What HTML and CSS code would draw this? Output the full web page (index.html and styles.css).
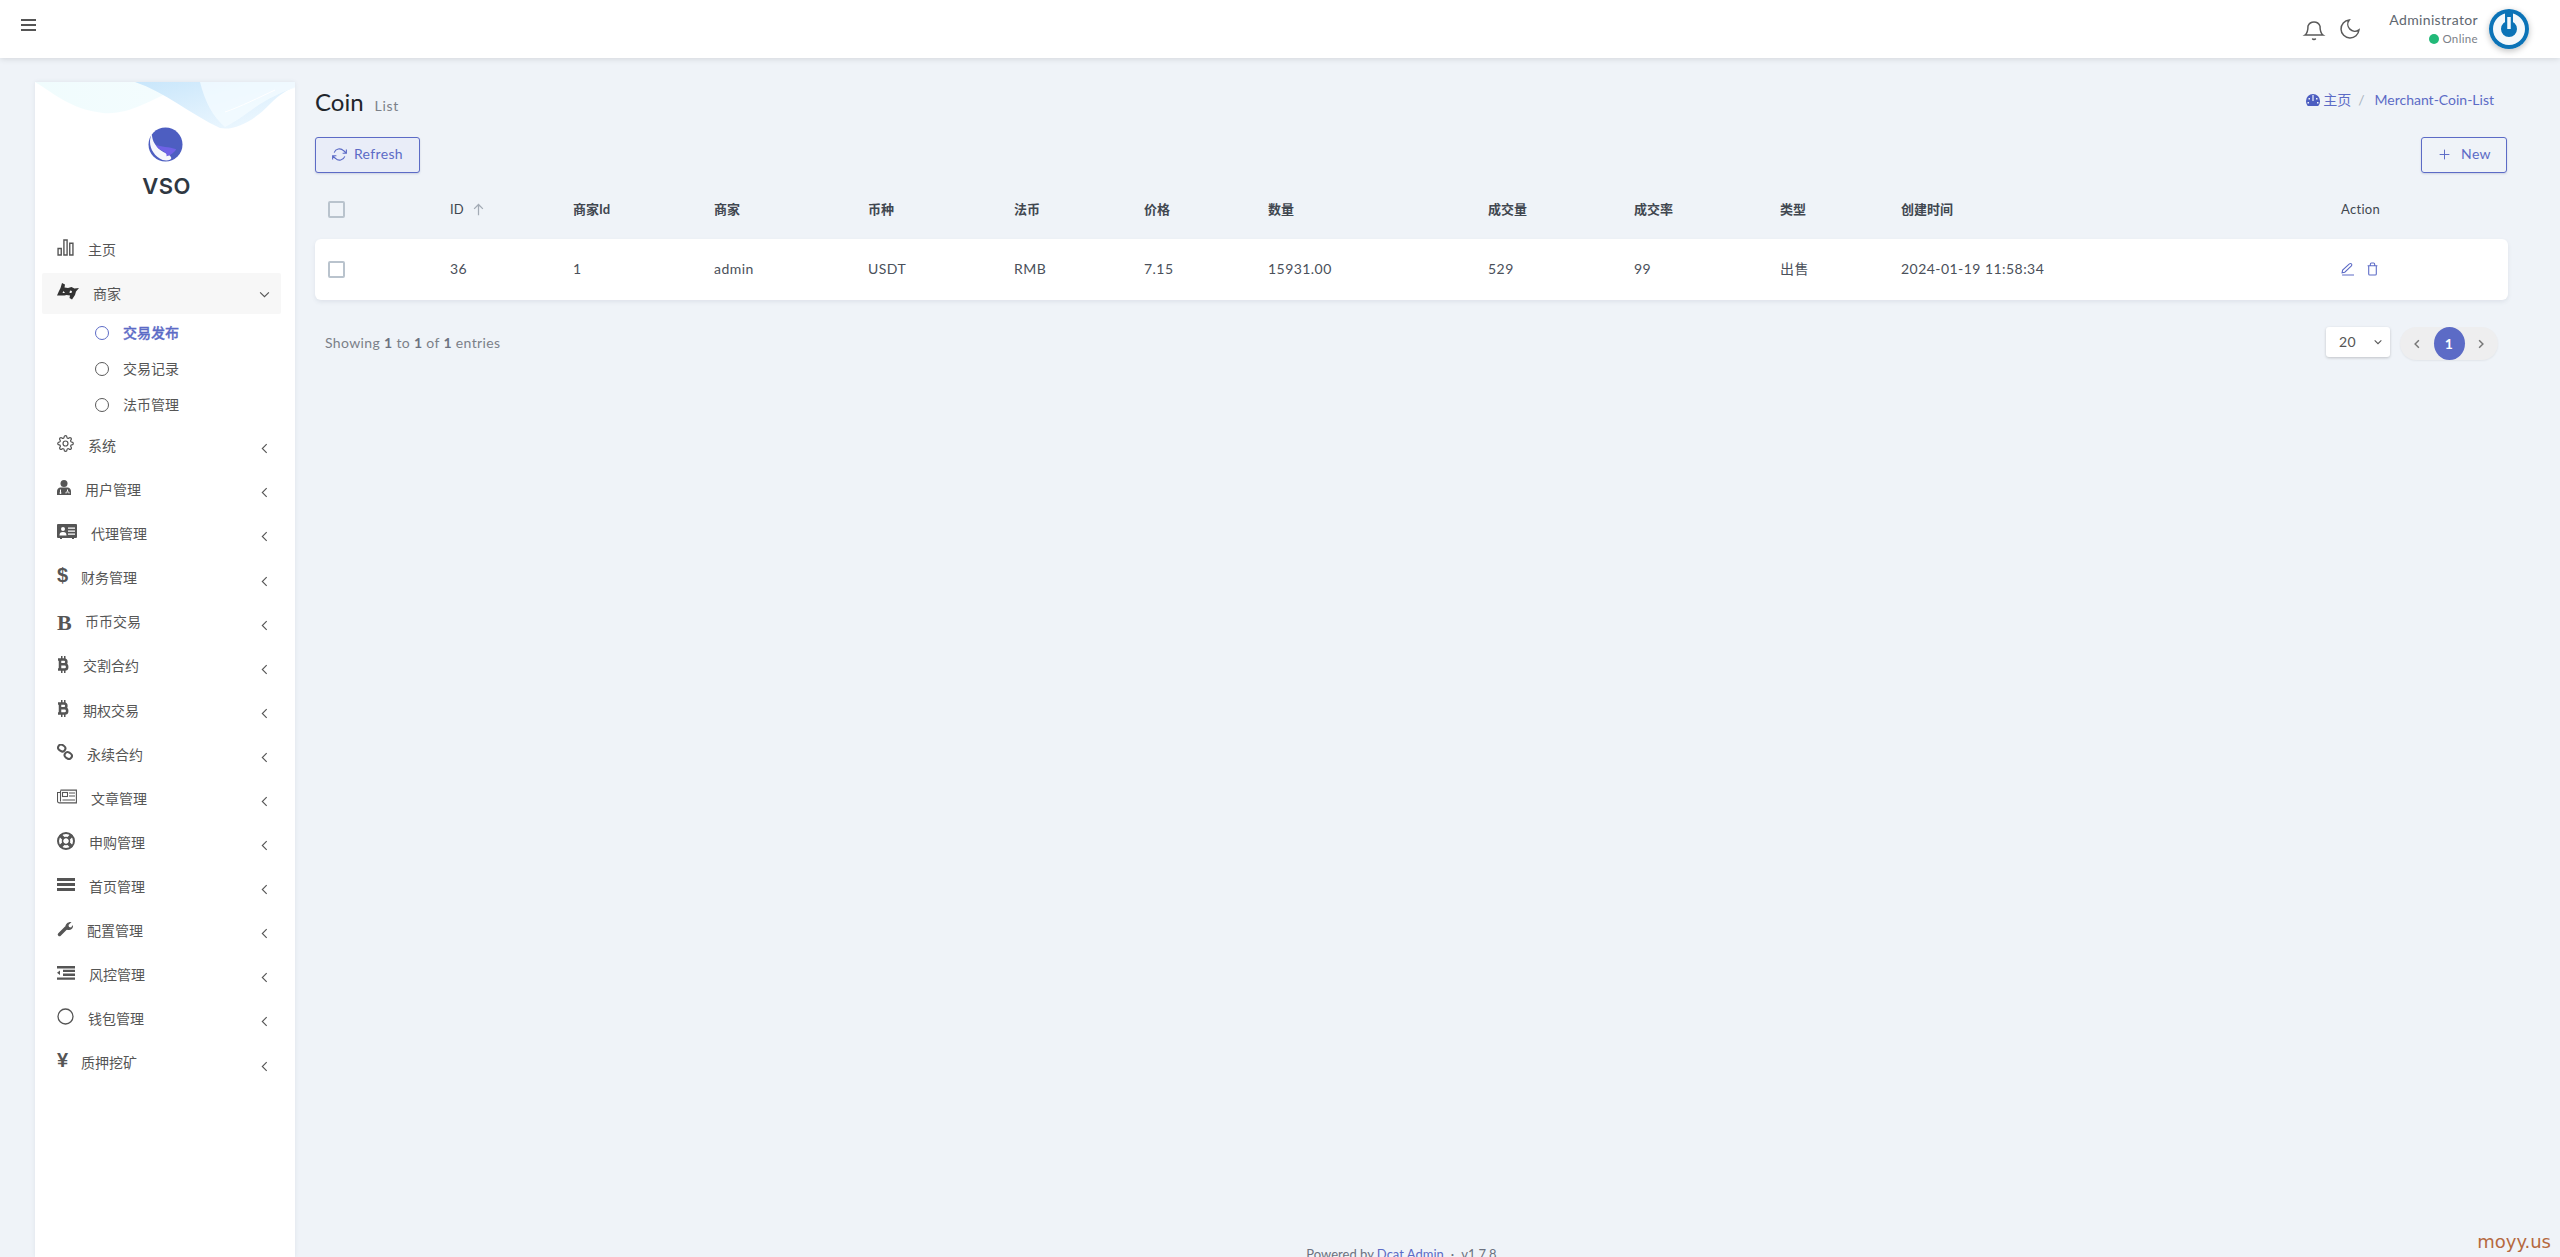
FILE: index.html
```html
<!DOCTYPE html>
<html lang="zh-CN">
<head>
<meta charset="utf-8">
<title>Coin List</title>
<link rel="stylesheet" href="styles.css">
</head>
<body>
<svg class="defs" width="0" height="0" aria-hidden="true">
  <symbol id="chev-left" viewBox="0 0 8 12"><path d="M6.500 1 1.500 6l5 5" fill="none" stroke="currentColor" stroke-width="1.300"/></symbol>
  <symbol id="btc" viewBox="0 0 12 17"><g fill="none" stroke="currentColor" stroke-width="2.500"><path d="M1 3.500h6a2.300 2.300 0 0 1 0 4.800H3m0 0h4.600a2.500 2.500 0 0 1 0 5.200H1M3 3.500v10"/></g><path d="M4 0h1.500v3H4zM7 0h1.500v3H7zM4 14h1.500v3H4zM7 14h1.500v3H7z" fill="currentColor"/></symbol>
</svg>
<header class="topbar">
  <svg class="burger" viewBox="0 0 15 12"><path d="M0 0h15v2H0zM0 5h15v2H0zM0 10h15v2H0z" fill="currentColor"/></svg>
  <div class="top-right">
    <svg class="top-icon" viewBox="0 0 24 24"><path d="M18 9A6.500 6.500 0 0 0 6 9c0 7-3 9-3 9h18s-3-2-3-9"/><path d="M13.700 21.500a2 2 0 0 1-3.400 0"/></svg>
    <svg class="top-icon" viewBox="0 0 24 24"><path d="M21 12.790A9 9 0 1 1 11.210 3 7 7 0 0 0 21 12.790z"/></svg>
    <div class="user">
      <div class="user-name">Administrator</div>
      <div class="user-status"><span class="dot"></span>Online</div>
    </div>
    <div class="avatar">
      <svg viewBox="0 0 40 40"><circle cx="20" cy="20" r="20" fill="#0b73b7"/><circle cx="20" cy="20" r="12" fill="none" stroke="#f4f8fb" stroke-width="8"/><path d="M20 4v16" stroke="#0b73b7" stroke-width="8"/><path d="M20 8v12" stroke="#f4f8fb" stroke-width="3.500"/></svg>
    </div>
  </div>
</header>
<div class="layout">
  <aside class="sidebar">
    <svg class="wave" viewBox="0 0 260 50" preserveAspectRatio="none">
      <defs>
        <linearGradient id="w1" x1="0" x2="1" y1="0" y2="0"><stop offset="0" stop-color="#f0fcfd"/><stop offset="1" stop-color="#f4fcfe"/></linearGradient>
        <linearGradient id="w2" x1="0" x2="1" y1="0" y2="1"><stop offset="0" stop-color="#c8e6fb"/><stop offset=".55" stop-color="#e0f1fd"/><stop offset="1" stop-color="#f2faff"/></linearGradient>
      </defs>
      <path d="M0 0C20 12 35 27 68 31 95 33 115 18 140 8L150 0z" fill="url(#w1)"/>
      <path d="M100 0C130 10 155 32 185 46 200 49 220 38 235 22 245 12 252 8 260 5V0z" fill="url(#w2)"/>
      <path d="M165 0C170 20 178 35 190 45 205 38 225 20 240 14 250 9 255 7 260 6V0z" fill="#f4fbff" opacity=".8"/>
      <path d="M190 30C205 25 225 15 240 8" fill="none" stroke="#fff" stroke-width="1"/>
    </svg>
    <div class="brand">
      <svg class="logo" viewBox="0 0 36 36">
        <circle cx="18" cy="18" r="17.500" fill="#4d5ec1"/>
        <path d="M4 7C-1 17 4 29 15 34c5 1 9 0 9-2-1-4-7-5-11-8C9 21 4 15 4 7z" fill="#fff" opacity=".95"/>
        <path d="M8 18c5 3 14 2 21 5-3 5-8 7-10 7 1-3-3-5-7-7-2-1-3-3-4-5z" fill="#6f62e6"/>
      </svg>
      <div class="brand-name">VSO</div>
    </div>
    <nav class="menu">
      <a class="item">
        <svg class="ico w17" viewBox="0 0 16 16"><path d="M1 9h3v6H1zM6.500 1h3v14h-3zM12 4h3v11h-3z" fill="none" stroke="currentColor" stroke-width="1.300"/></svg>
        <span>主页</span>
      </a>
      <a class="item active">
        <svg class="ico w22" viewBox="0 0 22 17"><path d="M5 0l3 1.500-.5 3 3.500.5 3.500-1 3 1.500 4.500-.5-3 3.500-1 3.500-3 4.500-2.500-1.500.5-2.500-3.500-.5-2 .5L0 12.500l2-4.500 1.500-3zM6.500 8l-1 2 2.500 0zM13 7.500l-.5 2.500 2 0 .5-2z" fill="#333" fill-rule="evenodd"/></svg>
        <span>商家</span>
        <svg class="caret down" viewBox="0 0 12 8"><path d="M1 1.500 6 6.500l5-5" fill="none" stroke="currentColor" stroke-width="1.300"/></svg>
      </a>
      <a class="sub current"><i class="ring"></i><span>交易发布</span></a>
      <a class="sub"><i class="ring"></i><span>交易记录</span></a>
      <a class="sub"><i class="ring"></i><span>法币管理</span></a>
      <a class="item">
        <svg class="ico w17" viewBox="0 0 24 24"><circle cx="12" cy="12" r="3.500" fill="none" stroke="currentColor" stroke-width="1.700"/><path fill="none" stroke="currentColor" stroke-width="1.700" d="M19.400 15a1.650 1.650 0 0 0 .33 1.820l.06.06a2 2 0 0 1 0 2.830 2 2 0 0 1-2.830 0l-.06-.06a1.650 1.650 0 0 0-1.820-.33 1.650 1.650 0 0 0-1 1.510V21a2 2 0 0 1-2 2 2 2 0 0 1-2-2v-.09A1.650 1.650 0 0 0 9 19.400a1.650 1.650 0 0 0-1.820.33l-.06.06a2 2 0 0 1-2.830 0 2 2 0 0 1 0-2.830l.06-.06a1.650 1.650 0 0 0 .33-1.820 1.650 1.650 0 0 0-1.510-1H3a2 2 0 0 1-2-2 2 2 0 0 1 2-2h.09A1.650 1.650 0 0 0 4.600 9a1.650 1.650 0 0 0-.33-1.820l-.06-.06a2 2 0 0 1 0-2.830 2 2 0 0 1 2.830 0l.06.06a1.650 1.650 0 0 0 1.820.33H9a1.650 1.650 0 0 0 1-1.510V3a2 2 0 0 1 2-2 2 2 0 0 1 2 2v.09a1.650 1.650 0 0 0 1 1.510 1.650 1.650 0 0 0 1.820-.33l.06-.06a2 2 0 0 1 2.830 0 2 2 0 0 1 0 2.830l-.06.06a1.650 1.650 0 0 0-.33 1.820V9a1.650 1.650 0 0 0 1.510 1H21a2 2 0 0 1 2 2 2 2 0 0 1-2 2h-.09a1.650 1.650 0 0 0-1.510 1z"/></svg>
        <span>系统</span>
        <svg class="caret"><use href="#chev-left"/></svg>
      </a>
      <a class="item">
        <svg class="ico w14" viewBox="0 0 14 15"><circle cx="7" cy="3.500" r="3.500" fill="currentColor"/><path d="M3 7.500h8c2 .5 3 2 3 4V15H0v-3.500c0-2 1-3.500 3-4z" fill="currentColor"/><path d="M3.500 9.500v3M10.500 9.500v2" stroke="#fff" stroke-width="1"/><circle cx="3.500" cy="13" r=".9" fill="#fff"/><path d="M9 13.500v-1.500h3v1.500" stroke="#fff" fill="none" stroke-width=".8"/></svg>
        <span>用户管理</span>
        <svg class="caret"><use href="#chev-left"/></svg>
      </a>
      <a class="item">
        <svg class="ico w20" viewBox="0 0 20 15"><rect width="20" height="14" rx="1" fill="currentColor"/><path d="M3 15h2v-1H3zM15 15h2v-1h-2z" fill="currentColor"/><circle cx="6" cy="5" r="2" fill="#fff"/><path d="M2.500 11.500c0-2.500 1-3.500 3.500-3.500s3.500 1 3.500 3.500zM11 3.500h7v1.200h-7zM11 6.500h7v1.200h-7zM11 9.500h7v1.200h-7z" fill="#fff"/></svg>
        <span>代理管理</span>
        <svg class="caret"><use href="#chev-left"/></svg>
      </a>
      <a class="item">
        <span class="ico-glyph sans w10">$</span>
        <span>财务管理</span>
        <svg class="caret"><use href="#chev-left"/></svg>
      </a>
      <a class="item">
        <span class="ico-glyph serif w14">B</span>
        <span>币币交易</span>
        <svg class="caret"><use href="#chev-left"/></svg>
      </a>
      <a class="item">
        <svg class="ico w12"><use href="#btc"/></svg>
        <span>交割合约</span>
        <svg class="caret"><use href="#chev-left"/></svg>
      </a>
      <a class="item">
        <svg class="ico w12"><use href="#btc"/></svg>
        <span>期权交易</span>
        <svg class="caret"><use href="#chev-left"/></svg>
      </a>
      <a class="item">
        <svg class="ico w16" viewBox="0 0 16 16"><g fill="none" stroke="currentColor" stroke-width="2"><rect x="1" y="1" width="7.500" height="6" rx="3" transform="rotate(35 4.700 4)"/><rect x="7.500" y="8.500" width="7.500" height="6" rx="3" transform="rotate(35 11.200 11.500)"/></g></svg>
        <span>永续合约</span>
        <svg class="caret"><use href="#chev-left"/></svg>
      </a>
      <a class="item">
        <svg class="ico w20" viewBox="0 0 20 14"><g fill="none" stroke="currentColor" stroke-width="1.100"><path d="M3.500.6h15.900v12.800H2.500a2 2 0 0 1-2-2V3H3.500"/><path d="M3.500 1v11"/><rect x="5.500" y="3" width="5" height="4"/><path d="M12 3.500h6M12 6.500h6M5.500 10.500h12.500"/></g></svg>
        <span>文章管理</span>
        <svg class="caret"><use href="#chev-left"/></svg>
      </a>
      <a class="item">
        <svg class="ico w18r" viewBox="0 0 18 18"><circle cx="9" cy="9" r="8" fill="none" stroke="currentColor" stroke-width="2"/><circle cx="9" cy="9" r="3.500" fill="none" stroke="currentColor" stroke-width="1.500"/><path d="m3 3 4 4M15 3l-4 4M3 15l4-4M15 15l-4-4" stroke="currentColor" stroke-width="3.500"/></svg>
        <span>申购管理</span>
        <svg class="caret"><use href="#chev-left"/></svg>
      </a>
      <a class="item">
        <svg class="ico w18" viewBox="0 0 18 14"><path d="M0 0h18v3H0zM0 5h18v3H0zM0 10h18v3H0z" fill="currentColor"/></svg>
        <span>首页管理</span>
        <svg class="caret"><use href="#chev-left"/></svg>
      </a>
      <a class="item">
        <svg class="ico w16" viewBox="0 0 16 16"><path d="M2.500 13.500 9 7" stroke="currentColor" stroke-width="3.500" stroke-linecap="round"/><path d="M9 8.500C7 4.500 10 .5 14.500 1l-3 3 .5 2 2 .5 2-2.500c.5 4.500-3 6-6.500 4.500z" fill="currentColor"/></svg>
        <span>配置管理</span>
        <svg class="caret"><use href="#chev-left"/></svg>
      </a>
      <a class="item">
        <svg class="ico w18" viewBox="0 0 18 14"><path d="M0 0h18v2.400H0zM6 3.700h12v2.400H6zM6 7.500h12v2.400H6zM0 11.400h18v2.400H0zM0 6.700 3 4.500v4.500z" fill="currentColor"/></svg>
        <span>风控管理</span>
        <svg class="caret"><use href="#chev-left"/></svg>
      </a>
      <a class="item">
        <svg class="ico w17" viewBox="0 0 17 17"><circle cx="8.500" cy="8.500" r="7.500" fill="none" stroke="currentColor" stroke-width="1.300"/></svg>
        <span>钱包管理</span>
        <svg class="caret"><use href="#chev-left"/></svg>
      </a>
      <a class="item">
        <span class="ico-glyph sans w10">¥</span>
        <span>质押挖矿</span>
        <svg class="caret"><use href="#chev-left"/></svg>
      </a>
    </nav>
  </aside>
  <main class="content">
    <div class="page-head">
      <h1 class="title">Coin<small>List</small></h1>
      <div class="crumbs">
        <svg class="crumb-ico" viewBox="0 0 14 12"><path d="M7 0a7 7 0 0 0-7 7c0 2 .7 3.700 1.800 5h10.400A7 7 0 0 0 14 7a7 7 0 0 0-7-7z" fill="#4d5ec1"/><path d="M6.400 1h1.200v6H6.400zM2.500 4h1.500v1.500H2.500zM10 4h1.500v1.500H10zM1.500 8h1.500v1.500H1.500zM11 8h1.500v1.500H11z" fill="#eff3f8"/></svg>
        <a>主页</a><span class="sep">/</span><a>Merchant-Coin-List</a>
      </div>
    </div>
    <div class="toolbar">
      <a class="btn tinted">
        <svg viewBox="0 0 24 24"><path d="M23 4v6h-6M1 20v-6h6M3.510 9a9 9 0 0 1 14.850-3.360L23 10M1 14l4.640 4.360A9 9 0 0 0 20.490 15"/></svg>
        Refresh
      </a>
      <a class="btn new">
        <svg viewBox="0 0 24 24"><path d="M12 3v18M3 12h18"/></svg>
        New
      </a>
    </div>
    <div class="grid-row head">
      <span><i class="check"></i></span>
      <span class="id-head">ID<svg viewBox="0 0 24 24"><path d="M12 21V4M5 11l7-7 7 7"/></svg></span>
      <span>商家Id</span><span>商家</span><span>币种</span><span>法币</span><span>价格</span><span>数量</span>
      <span>成交量</span><span>成交率</span><span>类型</span><span>创建时间</span><span class="action">Action</span>
    </div>
    <div class="grid-row body">
      <span><i class="check"></i></span>
      <span>36</span><span>1</span><span>admin</span><span>USDT</span><span>RMB</span><span>7.15</span><span>15931.00</span>
      <span>529</span><span>99</span><span>出售</span><span>2024-01-19 11:58:34</span>
      <span class="actions">
        <svg viewBox="0 0 24 24"><path d="M2 23h22M15.500 2.500a2.600 2.600 0 0 1 3.700 3.700L7 18l-5 1 1-5z"/></svg>
        <svg viewBox="0 0 24 24"><path d="M3 6h18M5 6v15a2 2 0 0 0 2 2h10a2 2 0 0 0 2-2V6M8 6V3a2 2 0 0 1 2-2h4a2 2 0 0 1 2 2v3"/></svg>
      </span>
    </div>
    <div class="pager-row">
      <div class="showing">Showing <b>1</b> to <b>1</b> of <b>1</b> entries</div>
      <div class="per-page">20
        <svg viewBox="0 0 12 8"><path d="M1 1.500 6 6.500l5-5"/></svg>
      </div>
      <div class="pager">
        <svg viewBox="0 0 8 12"><path d="M6.500 1 1.500 6l5 5"/></svg>
        <span class="page-on">1</span>
        <svg viewBox="0 0 8 12"><path d="M1.500 1l5 5-5 5"/></svg>
      </div>
    </div>
    <footer class="foot">Powered by <a>Dcat Admin</a><span class="mid">·</span>v1.7.8</footer>
  </main>
</div>
<div class="watermark">moyy.us</div>
</body>
</html>
```
FILE: styles.css
```css
* { box-sizing: border-box; }
html, body { height: 100%; }
body {
  margin: 0;
  height: 1257px;
  overflow: hidden;
  background: #eff3f8;
  color: #414750;
  font: 14px/1.4 Lato, "Noto Sans CJK SC", sans-serif;
  letter-spacing: .35px;
  display: flex;
  flex-direction: column;
}
.defs { display: block; height: 0; }
a { color: inherit; text-decoration: none; }

.topbar {
  flex: none;
  height: 58px;
  background: #fff;
  box-shadow: 0 1px 6px rgba(0,0,0,.12);
  display: flex;
  align-items: center;
  padding: 0 31px 6px 21px;
  position: relative;
  z-index: 2;
}
.burger { width: 15px; height: 12px; color: #555; margin-bottom: 2px; }
.top-right { margin-left: auto; display: flex; align-items: center; padding-top: 6px; }
.top-icon { width: 24px; height: 24px; margin-right: 12px; fill: none; stroke: #5a5a5a; stroke-width: 1.500; }
.top-icon + .user { margin-left: 15px; }
.user { margin: 0 11px 0 0; text-align: right; line-height: 1; }
.user-name { font-size: 14px; color: #606770; }
.user-status { font-size: 11.500px; color: #7b8088; margin-top: 6px; display: flex; align-items: center; justify-content: flex-end; }
.dot { width: 10px; height: 10px; border-radius: 50%; background: #21b978; margin-right: 3px; }
.avatar { width: 40px; height: 40px; border-radius: 50%; box-shadow: 0 2px 6px rgba(0,0,0,.25); }
.avatar svg { display: block; width: 40px; height: 40px; }

.layout { flex: 1; display: flex; padding: 24px 52px 0 35px; min-height: 0; }
.sidebar {
  flex: none;
  width: 260px;
  background: #fff;
  box-shadow: 0 0 4px rgba(80,90,120,.1);
  position: relative;
  color: #555;
}
.wave { position: absolute; left: 0; top: 0; width: 260px; height: 50px; }
.brand { height: 147px; padding-top: 45px; display: flex; flex-direction: column; align-items: center; position: relative; }
.logo { width: 35px; height: 35px; display: block; }
.brand-name { font: 600 22px/1 Inter, sans-serif; color: #2f3842; letter-spacing: .5px; margin-top: 13px; padding-left: 3px; }

.menu { padding: 0 14px 0 7px; }
.item {
  height: 41.100px;
  margin-bottom: 3px;
  padding: 0 13px 0 15px;
  display: flex;
  align-items: center;
  gap: 14px;
  letter-spacing: 0;
  border-radius: 2px;
}
.item.active { background: #f7f7f7; margin-bottom: 0; }
.ico { flex: none; display: block; margin-bottom: 4px; }
.ico-glyph { flex: none; display: block; color: #555; line-height: 1; margin-bottom: 6px; }
.ico-glyph.sans { font: 700 20px/1 "Liberation Sans", sans-serif; }
.ico-glyph.serif { font: 700 22px/1 "Liberation Serif", serif; }
.w10 { width: 10px; }
.w12 { width: 12px; height: 17px; }
.w14 { width: 14px; height: 15px; }
.w16 { width: 16px; height: 16px; }
.w17 { width: 17px; height: 17px; }
.w18 { width: 18px; height: 14px; }
.w18r { width: 18px; height: 18px; }
.w20 { width: 20px; height: 15px; }
.w22 { width: 22px; height: 17px; color: #333; }
.caret { width: 7px; height: 11px; margin-left: auto; margin-top: 6px; flex: none; }
.caret.down { width: 11px; height: 7px; margin-top: 2px; margin-right: -2px; }
.sub { height: 36px; display: flex; align-items: center; padding: 1px 0 0 53px; gap: 14px; letter-spacing: 0; }
.ring { width: 14px; height: 14px; border: 1.500px solid #5a5a5a; border-radius: 50%; flex: none; }
.sub.current { color: #5c6bc6; font-weight: 500; -webkit-text-stroke: .3px #5c6bc6; }
.sub.current .ring { border-color: #5c6bc6; }
.sub + .item { margin-top: 3px; }

.content { flex: 1; margin-left: 20px; min-width: 0; position: relative; display: flex; flex-direction: column; }
.page-head { display: flex; justify-content: space-between; height: 55px; padding-top: 3px; }
.title { margin: 0; font-size: 24px; font-weight: 400; line-height: 34px; color: #21252b; letter-spacing: 0; }
.title small { font-size: 14px; color: #7b8088; margin-left: 11px; letter-spacing: .7px; }
.crumbs { display: flex; align-items: center; height: 30px; color: #5c6bc6; padding-right: 14px; letter-spacing: 0; }
.crumb-ico { width: 14px; height: 12px; margin-right: 3px; }
.sep { color: #a9b3c0; margin: 0 10px 0 7px; }

.toolbar { display: flex; justify-content: space-between; height: 43px; }
.btn {
  height: 36px;
  border: 1px solid #5c6bc6;
  border-radius: 3px;
  color: #5c6bc6;
  display: flex;
  align-items: center;
  justify-content: center;
  gap: 7px;
  padding-bottom: 2px;
  box-shadow: 0 1px 2px rgba(60,70,130,.2);
}
.btn svg { width: 15px; height: 15px; fill: none; stroke: #5c6bc6; stroke-width: 1.800; }
.btn.tinted { width: 105px; background: #e9edf8; }
.btn.new { width: 86px; margin-right: 1px; gap: 10px; padding-left: 1px; }
.btn.new svg { width: 13px; height: 13px; }

.grid-row {
  display: grid;
  grid-template-columns: 122px 123px 141px 154px 146px 130px 124px 220px 146px 146px 121px 440px 1fr;
  padding-left: 13px;
  align-items: center;
  font-size: 13px;
}
.grid-row.head { height: 59px; font-weight: 700; letter-spacing: 0; padding-bottom: 1px; }
.grid-row.body {
  height: 61px;
  font-size: 14px;
  background: #fff;
  border-radius: 6px;
  box-shadow: 0 2px 4px rgba(80,90,120,.1);
  padding: 0 0 1px 13px;
  letter-spacing: .45px;
  color: #4a505a;
}
.grid-row > span { display: flex; align-items: center; white-space: pre; }
.check { display: block; width: 17px; height: 17px; border: 2px solid #b9c3cd; border-radius: 2px; background: transparent; }
.id-head { font-weight: 400; gap: 7px; }
.id-head svg { width: 15px; height: 15px; fill: none; stroke: #a3abb5; stroke-width: 2; }
.action { font-weight: 400; letter-spacing: .3px; }
.actions { gap: 12px; }
.actions svg { width: 13px; height: 14px; fill: none; stroke: #5c6bc6; stroke-width: 2; }

.pager-row { display: flex; align-items: flex-start; padding: 27px 10px 0 10px; }
.showing { color: #7b8088; margin-right: auto; padding-top: 6px; font-size: 14px; }
.showing b { font-weight: 700; color: #6c7280; }
.per-page {
  width: 64px;
  height: 30px;
  background: #fff;
  border-radius: 3px;
  box-shadow: 0 1px 3px rgba(0,0,0,.2);
  display: flex;
  align-items: center;
  justify-content: space-between;
  padding: 0 8px 0 13px;
  margin-right: 10px;
  color: #555;
}
.per-page svg { width: 8px; height: 6px; fill: none; stroke: #555; stroke-width: 1.600; }
.pager {
  width: 98px;
  height: 33px;
  background: #eeeeef;
  border-radius: 17px;
  display: flex;
  align-items: center;
  justify-content: space-between;
  padding: 0 14px;
  box-shadow: 0 1px 2px rgba(0,0,0,.06);
}
.pager svg { width: 6px; height: 10px; fill: none; stroke: #777; stroke-width: 2; }
.page-on {
  width: 31px;
  height: 33px;
  border-radius: 50%;
  background: #5c6bc6;
  color: #fff;
  font-weight: 700;
  display: flex;
  align-items: center;
  justify-content: center;
}
.foot { margin-top: auto; text-align: center; font-size: 13px; color: #6c7280; height: 12px; line-height: 18px; white-space: nowrap; padding-right: 20px; letter-spacing: 0; }
.foot a { color: #5c6bc6; }
.mid { margin: 0 7px; }

.watermark {
  position: absolute;
  right: 9px;
  top: 1233px;
  font: 18px/1 "DejaVu Sans", sans-serif;
  color: #b5693f;
  letter-spacing: 0;
}
```
